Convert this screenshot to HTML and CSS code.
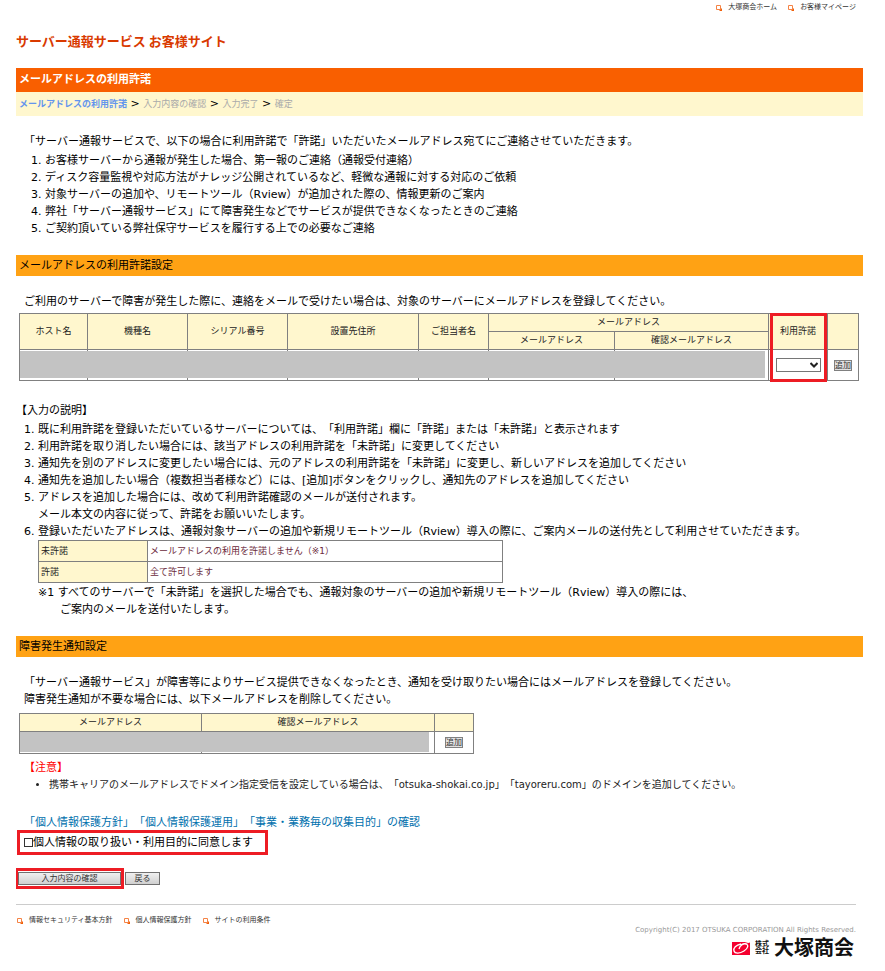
FILE: index.html
```
<!DOCTYPE html>
<html lang="ja">
<head>
    <meta charset="UTF-8">
    <meta name="viewport" content="width=device-width, initial-scale=1.0">
    <title>サーバー通報サービス お客様サイト</title>
    <link rel="stylesheet" href="styles.css">
</head>
<body>
    <svg class="defs" width="0" height="0">
        <symbol id="link-icon" viewBox="0 0 6 6">
            <path d="M0.5 0.5h4v4h-4z" fill="#fff" stroke="#f58345"/>
            <path d="M6 3v3H3z" fill="#f0600a"/>
        </symbol>
    </svg>

    <ul class="link-list top-links">
        <li><svg class="link-icon"><use href="#link-icon"/></svg><a href="#">大塚商会ホーム</a></li>
        <li><svg class="link-icon"><use href="#link-icon"/></svg><a href="#">お客様マイページ</a></li>
    </ul>

    <h1 class="site-title">サーバー通報サービス お客様サイト</h1>

    <h2 class="page-title">メールアドレスの利用許諾</h2>
    <div class="steps">
        <strong>メールアドレスの利用許諾</strong> &gt; <span>入力内容の確認</span> &gt; <span>入力完了</span> &gt; <span>確定</span>
    </div>

    <div class="intro">
        <p>「サーバー通報サービスで、以下の場合に利用許諾で「許諾」いただいたメールアドレス宛てにご連絡させていただきます。</p>
        <ol class="list">
            <li>お客様サーバーから通報が発生した場合、第一報のご連絡（通報受付連絡）</li>
            <li>ディスク容量監視や対応方法がナレッジ公開されているなど、軽微な通報に対する対応のご依頼</li>
            <li>対象サーバーの追加や、リモートツール（Rview）が追加された際の、情報更新のご案内</li>
            <li>弊社「サーバー通報サービス」にて障害発生などでサービスが提供できなくなったときのご連絡</li>
            <li>ご契約頂いている弊社保守サービスを履行する上での必要なご連絡</li>
        </ol>
    </div>

    <h3 class="section-title">メールアドレスの利用許諾設定</h3>

    <p class="lead">ご利用のサーバーで障害が発生した際に、連絡をメールで受けたい場合は、対象のサーバーにメールアドレスを登録してください。</p>
    <div class="table-wrap">
        <table class="grid servers">
            <colgroup>
                <col class="c-host">
                <col class="c-model">
                <col class="c-serial">
                <col class="c-place">
                <col class="c-person">
                <col class="c-mail">
                <col class="c-confirm">
                <col class="c-permit">
                <col class="c-add">
            </colgroup>
            <tr>
                <th rowspan="2">ホスト名</th>
                <th rowspan="2">機種名</th>
                <th rowspan="2">シリアル番号</th>
                <th rowspan="2">設置先住所</th>
                <th rowspan="2">ご担当者名</th>
                <th colspan="2">メールアドレス</th>
                <th rowspan="2">利用許諾</th>
                <th rowspan="2"></th>
            </tr>
            <tr>
                <th>メールアドレス</th>
                <th>確認メールアドレス</th>
            </tr>
            <tr class="data">
                <td></td>
                <td></td>
                <td></td>
                <td></td>
                <td></td>
                <td></td>
                <td></td>
                <td>
                    <div class="select">
                        <select aria-label="利用許諾">
                            <option></option>
                            <option>許諾</option>
                            <option>未許諾</option>
                        </select>
                        <svg viewBox="0 0 8 6"><path d="M0.5 1L4 4.5L7.5 1" fill="none" stroke="#222" stroke-width="2"/></svg>
                    </div>
                </td>
                <td><button type="button" class="add">追加</button></td>
            </tr>
        </table>
        <div class="mask"></div>
        <div class="permit-mark"></div>
    </div>

    <p class="help-title">【入力の説明】</p>
    <ol class="list help">
        <li>既に利用許諾を登録いただいているサーバーについては、「利用許諾」欄に「許諾」または「未許諾」と表示されます</li>
        <li>利用許諾を取り消したい場合には、該当アドレスの利用許諾を「未許諾」に変更してください</li>
        <li>通知先を別のアドレスに変更したい場合には、元のアドレスの利用許諾を「未許諾」に変更し、新しいアドレスを追加してください</li>
        <li>通知先を追加したい場合（複数担当者様など）には、[追加]ボタンをクリックし、通知先のアドレスを追加してください</li>
        <li>アドレスを追加した場合には、改めて利用許諾確認のメールが送付されます。<br>メール本文の内容に従って、許諾をお願いいたします。</li>
        <li>登録いただいたアドレスは、通報対象サーバーの追加や新規リモートツール（Rview）導入の際に、ご案内メールの送付先として利用させていただきます。
            <table class="grid meaning">
                <tr>
                    <th>未許諾</th>
                    <td>メールアドレスの利用を許諾しません（※1）</td>
                </tr>
                <tr>
                    <th>許諾</th>
                    <td>全て許可します</td>
                </tr>
            </table>
            <p class="note">※1 すべてのサーバーで「未許諾」を選択した場合でも、通報対象のサーバーの追加や新規リモートツール（Rview）導入の際には、<br>ご案内のメールを送付いたします。</p>
        </li>
    </ol>

    <h3 class="section-title">障害発生通知設定</h3>

    <p class="lead">「サーバー通報サービス」が障害等によりサービス提供できなくなったとき、通知を受け取りたい場合にはメールアドレスを登録してください。<br>障害発生通知が不要な場合には、以下メールアドレスを削除してください。</p>
    <div class="table-wrap notice-wrap">
        <table class="grid notice">
            <tr>
                <th class="n-mail">メールアドレス</th>
                <th class="n-confirm">確認メールアドレス</th>
                <th class="n-add"></th>
            </tr>
            <tr class="data">
                <td></td>
                <td></td>
                <td><button type="button" class="add">追加</button></td>
            </tr>
        </table>
        <div class="mask"></div>
    </div>

    <p class="caution">【注意】</p>
    <ul class="caution-list">
        <li>携帯キャリアのメールアドレスでドメイン指定受信を設定している場合は、「otsuka-shokai.co.jp」「tayoreru.com」のドメインを追加してください。</li>
    </ul>

    <form>
        <p class="policy"><a href="#">「個人情報保護方針」「個人情報保護運用」「事業・業務毎の収集目的」の確認</a></p>
        <label class="agree"><input type="checkbox">個人情報の取り扱い・利用目的に同意します</label>
        <div class="buttons">
            <span class="submit-mark"><button type="submit" class="btn">入力内容の確認</button></span>
            <button type="button" class="btn">戻る</button>
        </div>
    </form>

    <footer class="footer">
        <ul class="link-list">
            <li><svg class="link-icon"><use href="#link-icon"/></svg><a href="#">情報セキュリティ基本方針</a></li>
            <li><svg class="link-icon"><use href="#link-icon"/></svg><a href="#">個人情報保護方針</a></li>
            <li><svg class="link-icon"><use href="#link-icon"/></svg><a href="#">サイトの利用条件</a></li>
        </ul>
        <div class="company">
            <small>Copyright(C) 2017 OTSUKA CORPORATION All Rights Reserved.</small>
            <div class="logo">
                <svg viewBox="0 0 18 13">
                    <path d="M0 0h18v13H0z" fill="#f5002f"/>
                    <path d="M9 2C4 3 1 6 2 9c1 3 6 2.500 10 0s5-6 2-7c-3-.8-6 1.500-7 5" fill="none" stroke="#fff" stroke-width="1.300"/>
                    <path d="M9 2.500L18 0" stroke="#fff"/>
                </svg>
                <span class="kk">株式<br>会社</span>
                <b>大塚商会</b>
            </div>
        </div>
    </footer>
</body>
</html>
```
FILE: styles.css
```
* {
    box-sizing: border-box;
}
body {
    margin: 0 22px 0 16px;
    background-color: #fff;
    color: #000;
    font-family: "DejaVu Sans", "Noto Sans CJK JP", sans-serif;
    font-size: 11px;
    line-height: 17px;
    text-spacing-trim: space-all;
}
h1, h2, h3, p, ul, ol {
    margin: 0;
    padding: 0;
}
a {
    color: inherit;
    text-decoration: none;
}
.defs {
    position: absolute;
}

/* small links with the orange icon */
.link-list {
    display: flex;
    gap: 11px;
    list-style: none;
    color: #333;
    font-size: 7px;
    line-height: 15px;
}
.link-list li {
    display: flex;
    align-items: center;
    gap: 6px;
}
.link-icon {
    width: 6px;
    height: 6px;
}
.top-links {
    justify-content: flex-end;
    padding-right: 7px;
}

.site-title {
    padding: 16px 0 17px;
    color: #d93a00;
    font-family: "Noto Sans CJK JP", sans-serif;
    font-size: 13px;
    line-height: 20px;
}
.page-title {
    padding: 0 3px;
    background-color: #f95f00;
    color: #fff;
    font-size: 11px;
    line-height: 24px;
}
.steps {
    padding: 0 3px;
    background-color: #fff7ce;
    font-size: 11px;
    line-height: 24px;
}
.steps strong {
    color: #6495ed;
    font-size: 9px;
}
.steps span {
    color: #aaa;
    font-size: 9px;
}

.intro {
    padding: 17px 8px 0;
}
.list {
    margin-top: 2px;
    padding-left: 21px;
}
.section-title {
    margin-top: 18px;
    padding: 0 3px;
    background-color: #ffa214;
    font-size: 11px;
    font-weight: normal;
    line-height: 21px;
}
.lead {
    padding: 17px 8px 3px;
}

/* tables */
.table-wrap {
    position: relative;
    margin: 0 4px 0 3px;
}
.grid {
    border-collapse: collapse;
    font-size: 9px;
    line-height: 13px;
}
.grid th, .grid td {
    height: 18px;
    padding: 0 2px;
    border: 1px solid #808080;
    text-align: center;
}
.grid th {
    background-color: #fff7ce;
    color: #222;
    font-weight: normal;
}
.servers {
    width: 100%;
    table-layout: fixed;
}
.c-host { width: 68px; }
.c-model, .c-serial { width: 100px; }
.c-place { width: 131px; }
.c-person { width: 70px; }
.c-mail { width: 126px; }
.c-confirm { width: 154px; }
.c-permit { width: 59px; }
.c-add { width: 31px; }
.servers .data td {
    height: 31px;
}
.mask {
    position: absolute;
    left: 1px;
    right: 94px;
    bottom: 3px;
    height: 27px;
    background-color: #c3c3c3;
}
.permit-mark {
    position: absolute;
    top: 0;
    right: 32px;
    bottom: -1px;
    width: 57px;
    border: 3px solid #ed1c24;
    pointer-events: none;
}
.select {
    position: relative;
    width: 45px;
    height: 14px;
    margin: auto;
}
.select select {
    display: block;
    width: 100%;
    height: 100%;
    appearance: none;
    border: 1px solid #767676;
    border-radius: 0;
    background-color: #fff;
    font-size: 9px;
}
.select svg {
    position: absolute;
    top: 4px;
    right: 3px;
    width: 8px;
    height: 6px;
    pointer-events: none;
}
.add {
    display: block;
    margin: auto;
    padding: 0;
    border: 1px solid #808080;
    background-color: #e1e1e1;
    color: #333;
    font-family: inherit;
    font-size: 8px;
    line-height: 9px;
}

.help-title {
    padding-top: 21px;
}
.help {
    padding-left: 22px;
}
.meaning {
    width: 465px;
}
.grid.meaning th, .grid.meaning td {
    height: 21px;
    text-align: left;
}
.meaning th {
    width: 109px;
}
.meaning td {
    color: #6b2a3c;
}
.note {
    padding: 1px 0 0 22px;
    text-indent: -22px;
}

.notice-wrap {
    width: 455px;
    padding-top: 2px;
}
.notice {
    width: 100%;
}
.n-mail { width: 182px; }
.n-confirm { width: 233px; }
.notice .data td {
    height: 22px;
}
.notice-wrap .mask {
    right: 45px;
    bottom: 2px;
    height: 20px;
}
.caution {
    padding: 5px 8px 0;
    color: #f00;
}
.caution-list {
    padding-left: 33px;
    color: #222;
    font-size: 10px;
}

/* agreement */
.policy {
    padding: 21px 8px 0;
    color: #0070ad;
}
.agree {
    display: flex;
    align-items: center;
    width: fit-content;
    height: 25px;
    margin: -1px 0 0 1px;
    padding: 0 12px 0 4px;
    border: 3px solid #ed1c24;
}
.agree input {
    width: 9px;
    height: 9px;
    margin: 0;
    appearance: none;
    border: 1px solid #333;
    background-color: #fff;
}
.agree input:checked {
    background-color: #333;
}
.buttons {
    display: flex;
    align-items: center;
    gap: 1px;
    margin: 13px 0 0 -1px;
}
.submit-mark {
    display: flex;
    width: 109px;
    height: 21px;
    border: 3px solid #ed1c24;
    padding: 1px 0;
}
.btn {
    width: 35px;
    height: 13px;
    padding: 0;
    border: 1px solid #707070;
    background: linear-gradient(#f0f0f0, #d0d0d0);
    color: #333;
    font-family: inherit;
    font-size: 8px;
    line-height: 10px;
}
.submit-mark .btn {
    width: 100%;
}

.footer {
    margin: 15px 7px 0 0;
    padding-top: 8px;
    border-top: 1px solid #ccc;
}
.footer .link-list {
    padding-left: 1px;
}
.company {
    display: flex;
    flex-direction: column;
    align-items: flex-end;
    margin-top: -2px;
    color: #999;
}
.company small {
    font-size: 7px;
    line-height: 9px;
}
.logo {
    display: flex;
    align-items: center;
    gap: 5px;
    height: 26px;
    padding-right: 2px;
    color: #111;
}
.logo svg {
    width: 18px;
    height: 13px;
}
.logo .kk {
    font-size: 7px;
    font-weight: bold;
    line-height: 7px;
}
.logo b {
    font-size: 20px;
    line-height: 20px;
}
```
